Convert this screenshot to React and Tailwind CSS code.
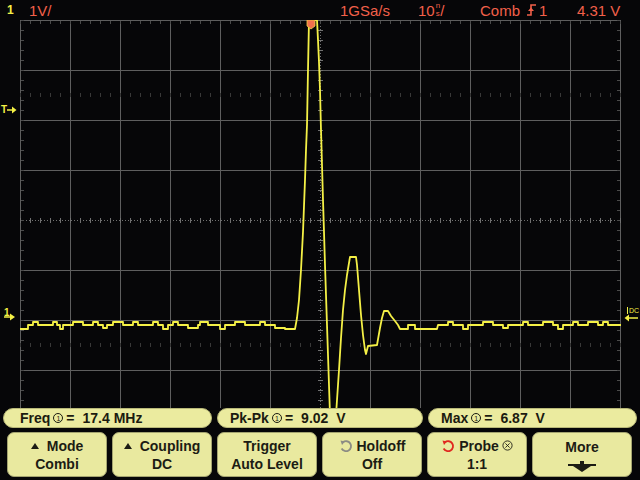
import React from 'react';

// scope screen: 12 x 8 divisions, 50px each, drawn from x=20, y=20
const GRID = '#5e5e5e';
const TRACE = '#f4f046';
const HEAD = '#f2604a';

const LEFT_BASE = [
  [8, 329], [5, 325], [5, 322], [15, 325], [4, 322], [3, 325], [3, 329], [10, 325],
  [10, 322], [10, 325], [5, 322], [5, 325], [4, 328], [6, 325], [10, 322], [10, 325],
  [5, 322], [15, 325], [5, 322], [5, 325], [5, 329], [5, 325], [5, 322], [10, 325],
  [10, 328], [2, 325], [8, 322], [12, 325], [5, 329], [10, 325], [10, 322], [15, 325],
  [5, 322], [10, 325], [10, 328], [10, 329],
];

const RIGHT_BASE = [
  [10, 325], [5, 322], [10, 325], [5, 329], [15, 325], [10, 322], [10, 325], [5, 328],
  [15, 325], [5, 322], [15, 325], [10, 322], [5, 325], [5, 329], [10, 325], [5, 322],
  [10, 325], [10, 322], [5, 325], [5, 322], [15, 325], [5, 322], [15, 325],
];

const PULSE = [
  [297, 318], [299, 300], [301, 270], [303, 232], [305, 180], [306, 150], [307, 125],
  [308, 70], [309, 20], [317, 20], [318, 40], [319, 62], [320, 90], [321, 130],
  [322, 165], [323, 200], [324, 232], [325, 265], [326, 295], [327, 325], [328, 355],
  [329, 385], [330, 415], [336, 415], [337, 400], [339, 370], [341, 338], [343, 310],
  [345, 290], [347, 275], [349, 263], [350, 257], [356, 257], [357, 265], [359, 290],
  [361, 315], [363, 335], [365, 350], [366, 354], [368, 346], [377, 345], [380, 328],
  [382, 318], [384, 311], [388, 311], [391, 316], [395, 321], [398, 325], [400, 329],
  [408, 329], [408, 325], [415, 325], [415, 329], [437, 329], [438, 325],
];

function stepTrace(x0, segs, first) {
  let x = x0;
  let d = '';
  segs.forEach(([w, y], i) => {
    d += (i === 0 && first ? `M${x} ${y}` : ` V${y}`) + ` H${x + w}`;
    x += w;
  });
  return d;
}

function tracePath() {
  let d = stepTrace(20, LEFT_BASE, true);
  PULSE.forEach(([x, y]) => { d += ` L${x} ${y}`; });
  d += stepTrace(438, RIGHT_BASE, false);
  return d;
}

function Graticule() {
  const solidV = [50, 100, 150, 200, 250, 350, 400, 450, 500, 550];
  const solidH = [50, 100, 150, 250, 300, 350];
  const minor = Array.from({ length: 61 }, (_, i) => i * 10);
  const minorV = Array.from({ length: 39 }, (_, i) => i * 10);
  return (
    <svg width="601" height="388" className="block shrink-0">
      {/* border */}
      <line x1="0.5" y1="0" x2="0.5" y2="388" stroke={GRID} />
      <line x1="600.5" y1="0" x2="600.5" y2="388" stroke={GRID} />
      <line x1="0" y1="0.5" x2="601" y2="0.5" stroke={GRID} />
      {solidV.map(x => (
        <line key={'v' + x} x1={x + 0.5} y1="0" x2={x + 0.5} y2="388" stroke={GRID} />
      ))}
      {solidH.map(y => (
        <line key={'h' + y} x1="0" y1={y + 0.5} x2="601" y2={y + 0.5} stroke={GRID} />
      ))}
      {/* dotted centre axes */}
      <line x1="0" y1="200.5" x2="601" y2="200.5" stroke="#707070" strokeDasharray="1 2" />
      <line x1="300.5" y1="0" x2="300.5" y2="388" stroke="#707070" strokeDasharray="1 2" />
      {minor.map(x => (
        <g key={'t' + x}>
          <line x1={x + 0.5} y1="1" x2={x + 0.5} y2="4" stroke="#4a4a4a" />
          <line x1={x + 0.5} y1="198" x2={x + 0.5} y2="203" stroke="#707070" />
          <line x1={x + 0.5} y1="73" x2={x + 0.5} y2="77" stroke="#383838" />
          <line x1={x + 0.5} y1="323" x2={x + 0.5} y2="327" stroke="#383838" />
        </g>
      ))}
      {minorV.map(y => (
        <g key={'s' + y}>
          <line x1="1" y1={y + 0.5} x2="4" y2={y + 0.5} stroke="#4a4a4a" />
          <line x1="597" y1={y + 0.5} x2="600" y2={y + 0.5} stroke="#4a4a4a" />
          <line x1="298" y1={y + 0.5} x2="303" y2={y + 0.5} stroke="#707070" />
        </g>
      ))}
      <g transform="translate(-20,-20)">
        <path d={tracePath()} fill="none" stroke={TRACE} strokeWidth="1.8" strokeLinejoin="round" />
        {/* trigger position marker */}
        <path d="M307 20 H315 V26 L311 29 L307 26 Z" fill="#f2704c" stroke="#f4d046" strokeWidth="0.8" />
      </g>
    </svg>
  );
}

function Circled({ children }) {
  return (
    <span className="mx-[3px] inline-flex h-[10px] w-[10px] items-center justify-center rounded-full border border-[#1b1b10] text-[7px] font-normal leading-none">
      {children}
    </span>
  );
}

function Meas({ label, value, w, pl }) {
  return (
    <div className={`flex h-[20px] ${w} ${pl} items-center rounded-[10px] border border-[#b8b878] bg-[#ebeb9f] text-[14px] font-bold text-[#1b1b10]`}>
      <span>{label}</span>
      <Circled>1</Circled>
      <span>=</span>
      <span className="ml-[8px] whitespace-pre">{value}</span>
    </div>
  );
}

function Knob({ color }) {
  return (
    <svg width="14" height="14" viewBox="0 0 14 14" className="mr-[4px]">
      <path d="M4 3.2 A5 5 0 1 1 2.6 9.5" fill="none" stroke={color} strokeWidth="1.8" />
      <path d="M1.5 1.5 L6 2.5 L3 6 Z" fill={color} />
    </svg>
  );
}

function Key({ children }) {
  return (
    <div className="flex h-[45px] w-[100px] flex-col items-center justify-center rounded-[7px] border border-[#a4a470] bg-[#e9e99f] text-[14px] font-bold leading-[18px] text-[#1c1c14]">
      {children}
    </div>
  );
}

const Up = () => (
  <svg width="8" height="6" viewBox="0 0 8 6" className="mr-[8px]">
    <path d="M0 6 L4 0 L8 6 Z" fill="#1c1c14" />
  </svg>
);

export default function App() {
  return (
    <div className="flex h-[480px] w-[640px] flex-col overflow-hidden bg-[#060608] font-['Liberation_Sans',Arial,sans-serif]">
      <div className="flex h-[20px] items-center text-[15px] leading-none" style={{ color: HEAD }}>
        <span className="w-[29px] pl-[7px] text-[12px] font-bold text-[#f4f046]">1</span>
        <span className="w-[311px]">1V/</span>
        <span className="w-[78px]">1GSa/s</span>
        <span className="flex w-[62px] items-center">
          10
          <span className="ml-[1px] flex flex-col text-[8px] leading-[8px]">
            <span>n</span>
            <span>s</span>
          </span>
          /
        </span>
        <span className="flex w-[97px] items-center">
          Comb
          <svg width="12" height="14" viewBox="0 0 12 14" className="ml-[6px] mr-[1px]">
            <path d="M1 12 H5 V2 H10" fill="none" stroke={HEAD} strokeWidth="1.6" />
            <path d="M2 8 L5 4.5 L8 8 Z" fill={HEAD} />
          </svg>
          1
        </span>
        <span>4.31 V</span>
      </div>

      <div className="flex h-[388px]">
        <div className="relative w-[20px] shrink-0 text-[#f4f046]">
          <div className="absolute left-[1px] top-[85px] flex items-center text-[10px] font-bold leading-none">
            T
            <svg width="10" height="8" viewBox="0 0 10 8">
              <path d="M0 4 H6" stroke="#f4f046" strokeWidth="1.5" />
              <path d="M5 0.5 L9.5 4 L5 7.5 Z" fill="#f4f046" />
            </svg>
          </div>
          <div className="absolute left-[4px] top-[288px] text-[10px] font-bold leading-none">1</div>
          <svg width="12" height="8" viewBox="0 0 12 8" className="absolute left-[4px] top-[293px]">
            <path d="M0 4 H7" stroke="#f4f046" strokeWidth="1.5" />
            <path d="M6 0.5 L11 4 L6 7.5 Z" fill="#f4f046" />
          </svg>
        </div>
        <Graticule />
        <div className="relative w-[19px] shrink-0 overflow-hidden text-[#f4f046]">
          <svg width="14" height="8" viewBox="0 0 14 8" className="absolute left-[3px] top-[294px]">
            <path d="M4 4 H14" stroke="#f4f046" strokeWidth="1.5" />
            <path d="M5 0.5 L0.5 4 L5 7.5 Z" fill="#f4f046" />
          </svg>
          <div className="absolute left-[6px] top-[287px] border-l border-[#f4f046] pl-[1px] text-[7px] leading-none">DC</div>
        </div>
      </div>

      <div className="flex gap-[5px] pl-[3px]">
        <Meas label="Freq" value="17.4 MHz" w="w-[209px]" pl="pl-[16px]" />
        <Meas label="Pk-Pk" value="9.02  V" w="w-[206px]" pl="pl-[12px]" />
        <Meas label="Max" value="6.87  V" w="w-[209px]" pl="pl-[12px]" />
      </div>

      <div className="mt-[4px] flex gap-[5px] pl-[7px]">
        <Key>
          <span className="flex items-center"><Up />Mode</span>
          <span>Combi</span>
        </Key>
        <Key>
          <span className="flex items-center"><Up />Coupling</span>
          <span>DC</span>
        </Key>
        <Key>
          <span>Trigger</span>
          <span>Auto Level</span>
        </Key>
        <Key>
          <span className="flex items-center"><Knob color="#8c8c84" />Holdoff</span>
          <span>Off</span>
        </Key>
        <Key>
          <span className="flex items-center">
            <Knob color="#e02820" />
            Probe
            <svg width="11" height="11" viewBox="0 0 11 11" className="ml-[3px]">
              <circle cx="5.5" cy="5.5" r="4.6" fill="none" stroke="#1c1c14" strokeWidth="0.9" />
              <path d="M3.4 3.4 L7.6 7.6 M7.6 3.4 L3.4 7.6" stroke="#1c1c14" strokeWidth="0.9" />
            </svg>
          </span>
          <span>1:1</span>
        </Key>
        <Key>
          <span>More</span>
          <svg width="28" height="11" viewBox="0 0 28 11" className="mt-[5px]">
            <rect x="12" y="0" width="4" height="3" fill="#1c1c14" />
            <rect x="0" y="3" width="28" height="2" fill="#1c1c14" />
            <path d="M5 5 H23 L14 11 Z" fill="#1c1c14" />
          </svg>
        </Key>
      </div>
    </div>
  );
}
